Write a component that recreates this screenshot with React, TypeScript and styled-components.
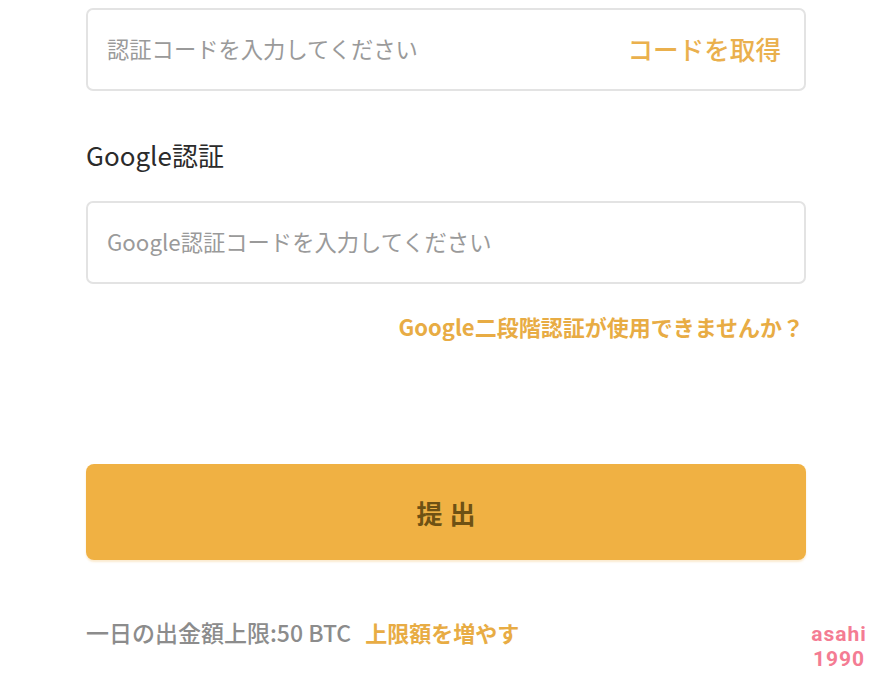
import React from "react";
import styled, { createGlobalStyle } from "styled-components";

const Global = createGlobalStyle`
  html, body { margin: 0; padding: 0; background: #ffffff; }
  body { font-family: "Noto Sans CJK JP", "Noto Sans", sans-serif; }
`;

const Page = styled.div`
  position: relative;
  width: 882px;
  height: 696px;
  overflow: hidden;
  box-sizing: border-box;
  padding: 8px 0 0 86px;
`;

const Form = styled.div`
  width: 720px;
  display: flex;
  flex-direction: column;
`;

const Field = styled.div<{ $mt?: number }>`
  box-sizing: border-box;
  height: 83px;
  margin-top: ${(p) => p.$mt ?? 0}px;
  border: 2px solid #e3e3e3;
  border-radius: 7px;
  display: flex;
  align-items: center;
  padding: 0 23px 3px 19px;
  background: #fff;
`;

const Input = styled.input`
  flex: 1;
  border: none;
  outline: none;
  background: transparent;
  padding: 0;
  font-family: "Noto Sans CJK JP", "Noto Sans", sans-serif;
  font-size: 22.3px;
  color: #333;
  &::placeholder { color: #9a9a9a; }
`;

const FieldAction = styled.span`
  font-size: 25.6px;
  font-weight: 500;
  color: #eab04d;
  white-space: nowrap;
`;

const Label = styled.div`
  margin-top: 46px;
  font-size: 26px;
  line-height: 36px;
  color: #2b2b2b;
`;

const HelpLink = styled.div`
  margin-top: 27px;
  align-self: flex-end;
  margin-right: 2px;
  font-size: 22px;
  line-height: 30px;
  font-weight: 700;
  color: #e8ac44;
`;

const Submit = styled.button`
  margin-top: 123px;
  height: 96px;
  border: none;
  border-radius: 8px;
  background: #f0b143;
  box-shadow: 0 2px 2px rgba(240, 177, 67, 0.25);
  font-family: "Noto Sans CJK JP", "Noto Sans", sans-serif;
  font-size: 26px;
  font-weight: 700;
  letter-spacing: 7px;
  text-indent: 7px;
  color: #6e5114;
  cursor: pointer;
`;

const Footer = styled.div`
  margin-top: 57px;
  display: flex;
  align-items: baseline;
  gap: 14px;
  line-height: 30px;
`;

const Limit = styled.span`
  font-size: 23px;
  color: #8c8c8c;
  font-weight: 500;
`;

const Raise = styled.span`
  font-size: 22px;
  color: #e8ac44;
  font-weight: 700;
`;

const Watermark = styled.div`
  position: absolute;
  left: 804px;
  top: 622px;
  width: 70px;
  display: flex;
  flex-direction: column;
  align-items: center;
  font-family: Roboto, "Noto Sans", sans-serif;
  font-weight: 700;
  font-size: 21px;
  letter-spacing: 1px;
  color: #f47c93;
`;

const MarkLine = styled.span`
  display: block;
  line-height: 25px;
`;

export default function App() {
  return (
    <>
      <Global />
      <Page>
        <Form>
          <Field>
            <Input placeholder="認証コードを入力してください" />
            <FieldAction>コードを取得</FieldAction>
          </Field>
          <Label>Google認証</Label>
          <Field $mt={28}>
            <Input placeholder="Google認証コードを入力してください" />
          </Field>
          <HelpLink>Google二段階認証が使用できませんか？</HelpLink>
          <Submit>提出</Submit>
          <Footer>
            <Limit>一日の出金額上限:50 BTC</Limit>
            <Raise>上限額を増やす</Raise>
          </Footer>
        </Form>
        <Watermark>
          <MarkLine>asahi</MarkLine>
          <MarkLine>1990</MarkLine>
        </Watermark>
      </Page>
    </>
  );
}
